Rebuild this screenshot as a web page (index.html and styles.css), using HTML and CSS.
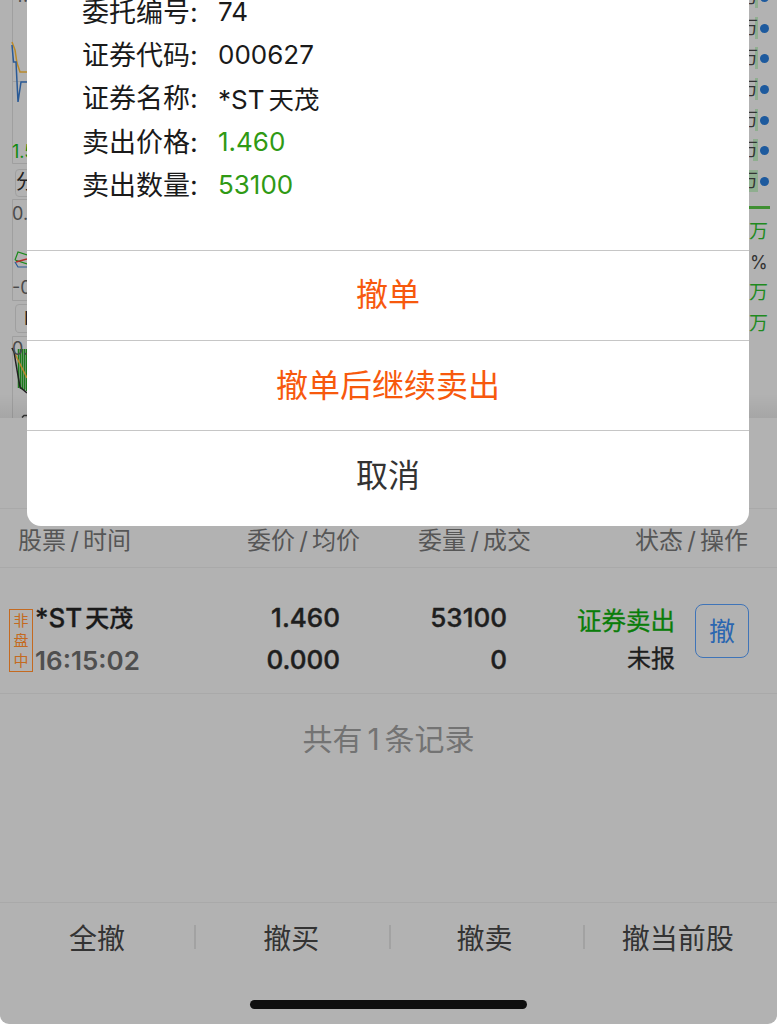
FILE: index.html
```html
<!DOCTYPE html>
<html lang="zh">
<head>
<meta charset="utf-8">
<title>撤单</title>
<link rel="stylesheet" href="styles.css">
</head>
<body>
<div class="page">
  <div class="behind">
    <div class="behind-left">
      <svg class="chart-svg" width="27" height="418" viewBox="0 0 27 418">
        <path d="M12.5 0V163.5H27M12.5 199.5H27M12.5 199.5V300.5H27M12.5 336.5H27M12.5 336.5V418M12.5 81.5H27M27 169.5H19Q15.500 169.500 15.500 173V192.500Q15.500 196.500 19 196.500H27M27 304.500H19Q15.500 304.500 15.500 308V328Q15.500 332.500 19 332.500H27" stroke="#9f9f9f" fill="none"/>
        <path d="M12 42L15 50L17 63L20 72H27" stroke="#b98a2c" stroke-width="1.5" fill="none"/>
        <path d="M12 45L13.500 62H16L18 102L21 82H27" stroke="#2a5a96" stroke-width="1.5" fill="none"/>
        <path d="M15 260L18 252L27 255M15 260L27 264" stroke="#1c8a1c" stroke-width="1.2" fill="none"/>
        <path d="M16 262L27 259" stroke="#b52a2a" stroke-width="1.5" fill="none"/>
        <path d="M15 262L18 267H27" stroke="#2a5a96" stroke-width="1.2" fill="none"/>
        <path d="M18.500 349V388M20.500 349V389M22.500 349V390M24.500 349V390M26.500 349V391" stroke="#1c7a1c" stroke-width="1.500" fill="none"/>
        <path d="M12 348L27 378" stroke="#b98a2c" stroke-width="1.5" fill="none"/>
        <path d="M12 348L14 352L17 370L20 387L27 393" stroke="#222" stroke-width="1.5" fill="none"/>
        <path d="M22 417.500L24 415.500H27" stroke="#333" stroke-width="1.500" fill="none"/>
      </svg>
      <span class="b-txt b0">4.0</span>
      <span class="b-txt b1">1.5</span>
      <span class="b-txt b2">分</span>
      <span class="b-txt b3">0.</span>
      <span class="b-txt b4">-0</span>
      <span class="b-txt b5">I</span>
      <span class="b-txt b6">0.</span>
    </div>
    <div class="behind-right">
      <div class="wan-row"><i class="bar b-s"></i><span class="wan">万</span><i class="dot"></i></div>
      <div class="wan-row"><i class="bar b-s"></i><span class="wan">万</span><i class="dot"></i></div>
      <div class="wan-row"><i class="bar b-s"></i><span class="wan">万</span><i class="dot"></i></div>
      <div class="wan-row"><i class="bar b-s"></i><span class="wan">万</span><i class="dot"></i></div>
      <div class="wan-row"><i class="bar b-s"></i><span class="wan">万</span><i class="dot"></i></div>
      <div class="wan-row"><i class="bar b-m"></i><span class="wan">万</span><i class="dot"></i></div>
      <div class="wan-row"><i class="bar b-l"></i><span class="wan">万</span><i class="dot"></i></div>
      <div class="g-line"></div>
      <div class="g-txt">万</div>
      <div class="g-txt pct">%</div>
      <div class="g-txt">万</div>
      <div class="g-txt">万</div>
    </div>
    <div class="behind-shade"></div>
  </div>

  <div class="sheet">
    <div class="sheet-top"></div>
    <div class="head">
      <span class="c1">股票<i class="sl">/</i>时间</span>
      <span class="c2">委价<i class="sl">/</i>均价</span>
      <span class="c3">委量<i class="sl">/</i>成交</span>
      <span class="c4">状态<i class="sl">/</i>操作</span>
    </div>
    <div class="row">
      <div class="tag">非<br>盘<br>中</div>
      <div class="col-name">
        <div class="name">*ST<span class="cjk-gap">天茂</span></div>
        <div class="time">16:15:02</div>
      </div>
      <div class="col-num n-price"><div>1.460</div><div>0.000</div></div>
      <div class="col-num n-vol"><div>53100</div><div>0</div></div>
      <div class="col-status"><div class="sell">证券卖出</div><div>未报</div></div>
      <div class="cancel-btn">撤</div>
    </div>
    <div class="count">共有<span class="digit">1</span>条记录</div>
    <div class="footer">
      <span class="f-item">全撤</span>
      <span class="f-item">撤买</span>
      <span class="f-item">撤卖</span>
      <span class="f-item">撤当前股</span>
    </div>
    <div class="home-wrap"><div class="home"></div></div>
  </div>

  <div class="dialog">
    <div class="info">
      <div class="line"><span class="k">委托编号:</span><span class="v">74</span></div>
      <div class="line"><span class="k">证券代码:</span><span class="v">000627</span></div>
      <div class="line"><span class="k">证券名称:</span><span class="v">*ST<span class="cjk-gap">天茂</span></span></div>
      <div class="line"><span class="k">卖出价格:</span><span class="v up">1.460</span></div>
      <div class="line"><span class="k">卖出数量:</span><span class="v up">53100</span></div>
    </div>
    <div class="act orange first">撤单</div>
    <div class="act orange second">撤单后继续卖出</div>
    <div class="act last">取消</div>
  </div>
</div>
</body>
</html>
```
FILE: styles.css
```css
* { box-sizing: border-box; }
html, body { margin: 0; padding: 0; }
body { font-family: Inter, "Noto Sans CJK SC", sans-serif; background: #fff; }
i { font-style: normal; }
.page { position: relative; width: 777px; height: 1024px; overflow: hidden; background: #b2b2b2; display: flex; flex-direction: column; border-radius: 0 0 9px 9px; }

.behind { height: 418px; position: relative; flex: none; overflow: hidden; }
.behind-shade { position: absolute; left: 0; right: 0; bottom: 0; height: 24px; background: linear-gradient(rgba(0,0,0,0), rgba(0,0,0,0.07)); }
.behind-left { position: absolute; left: 0; top: 0; width: 27px; height: 418px; overflow: hidden; color: #4a4a4a; font-size: 18px; line-height: 22px; }
.chart-svg { position: absolute; left: 0; top: 0; }
.b-txt { position: absolute; left: 12px; white-space: nowrap; }
.b0 { top: -15px; }
.b1 { top: 141px; color: #0f8a0f; }
.b2 { top: 171px; left: 16px; font-size: 20px; color: #222; }
.b3 { top: 203px; }
.b4 { top: 277px; }
.b5 { top: 308px; left: 24px; color: #222; }
.b6 { top: 338px; }

.behind-right { position: absolute; left: 740px; top: -18px; width: 37px; }
.wan-row { height: 30.7px; position: relative; font-size: 18px; line-height: 30.7px; color: #333; }
.wan { position: relative; display: block; }
.bar { position: absolute; right: 19px; top: 4px; height: 22px; background: #8fae8f; }
.b-s { width: 3px; }
.b-m { width: 5px; }
.b-l { width: 9px; }
.dot { position: absolute; left: 20px; top: 11px; width: 9px; height: 9px; border-radius: 50%; background: #1d5a9e; }
.g-line { height: 3px; width: 21px; background: #3f8f32; margin: 9px 0 8px 9px; }
.g-txt { font-size: 19px; color: #1f8a1f; height: 30.7px; line-height: 30.7px; padding-left: 9px; }
.pct { color: #333; padding-left: 10px; font-size: 18px; }

.sheet { flex: 1; display: flex; flex-direction: column; }
.sheet-top { height: 91px; flex: none; border-bottom: 1px solid #a9a9a9; }
.head { height: 59px; flex: none; display: flex; align-items: center; padding: 6px 29px 0 18px; border-bottom: 1px solid #a9a9a9; font-size: 24px; line-height: 34px; color: #565656; }
.sl { display: inline-block; width: 17px; text-align: center; }
.c1 { width: 229px; }
.c2 { width: 171px; }
.c4 { margin-left: auto; }

.row { height: 126px; flex: none; display: flex; align-items: flex-start; border-bottom: 1px solid #a9a9a9; }
.tag { margin: 41px 0 0 9px; width: 24px; height: 63px; flex: none; border: 1px solid #c46a20; color: #c46a20; font-size: 15px; line-height: 20px; text-align: center; padding-top: 1px; }
.col-name { margin: 29px 0 0 2px; width: 205px; font-size: 26px; line-height: 41.5px; }
.name { color: #1a1a1a; font-weight: 500; -webkit-text-stroke: 0.3px currentColor; }
.name .cjk-gap { font-size: 24px; margin-left: 3px; }
.cjk-gap { margin-left: 4px; }
.time { color: #4f4f4f; font-weight: 600; }
.col-num { margin-top: 29px; text-align: right; font-size: 26px; line-height: 41.5px; font-weight: 500; color: #1e1e1e; -webkit-text-stroke: 0.4px currentColor; }
.n-price { width: 100px; }
.n-vol { width: 167px; }
.col-status { margin-top: 34px; width: 168px; text-align: right; font-size: 24px; line-height: 38px; color: #1e1e1e; -webkit-text-stroke: 0.3px currentColor; }
.sell { color: #0a7d0a; font-size: 24.5px; }
.cancel-btn { margin: 36px 0 0 20px; width: 54px; height: 54px; flex: none; border: 1px solid #3f74b8; border-radius: 8px; color: #2b66b0; font-size: 26px; display: flex; align-items: center; justify-content: center; padding-bottom: 3px; }

.count { height: 209px; flex: none; padding-top: 25px; text-align: center; font-size: 30px; line-height: 40px; color: #737373; border-bottom: 1px solid #a9a9a9; }
.digit { margin: 0 5px; }

.footer { height: 70px; flex: none; display: grid; grid-template-columns: repeat(4, 1fr); }
.f-item { display: flex; align-items: center; justify-content: center; padding-bottom: 2px; font-size: 28px; color: #333; position: relative; }
.f-item:nth-child(n+3) { padding-right: 2px; }
.f-item:last-child { padding-right: 4px; }
.f-item + .f-item::before { content: ""; position: absolute; left: 0; top: 22px; height: 24px; width: 2px; background: #a2a2a2; }
.home-wrap { flex: 1; display: flex; justify-content: center; }
.home { width: 277px; height: 9px; margin-top: 27px; border-radius: 5px; background: #0f0f0f; }

.dialog { position: absolute; left: 27px; top: 0; width: 722px; height: 526px; background: #fff; border-radius: 0 0 14px 14px; display: flex; flex-direction: column; }
.info { height: 251px; flex: none; padding: 0 0 0 55px; border-bottom: 1px solid #c6c6c6; }
.line { height: 43.3px; display: flex; align-items: center; font-size: 26px; color: #1a1a1a; position: relative; top: -10.5px; }
.k { width: 136px; flex: none; font-size: 27px; margin-top: -2px; }
.v .cjk-gap { font-size: 25.5px; }
.up { color: #2f9a14; }
.act { display: flex; align-items: center; justify-content: center; font-size: 32px; color: #333; height: 90px; flex: none; border-bottom: 1px solid #c6c6c6; }
.act.first { padding-bottom: 8px; }
.act.second { padding-bottom: 6px; }
.act.last { border-bottom: 0; height: 95px; padding-bottom: 12px; }
.orange { color: #f7590d; }
```
